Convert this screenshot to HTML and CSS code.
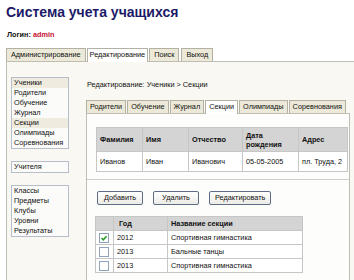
FILE: index.html
```html
<!DOCTYPE html>
<html lang="ru">
<head>
<meta charset="utf-8">
<title>Система учета учащихся</title>
<link rel="stylesheet" href="styles.css">
</head>
<body>
<h1 class="title">Система учета учащихся</h1>
<div class="login">Логин: <span class="user">admin</span></div>
<nav class="tabs">
  <span class="tab">Администрирование</span>
  <span class="tab active">Редактирование</span>
  <span class="tab">Поиск</span>
  <span class="tab exit">Выход</span>
</nav>
<div class="main">
  <aside class="side">
    <ul class="box">
      <li class="sel">Ученики</li>
      <li>Родители</li>
      <li>Обучение</li>
      <li>Журнал</li>
      <li class="sel">Секции</li>
      <li>Олимпиады</li>
      <li>Соревнования</li>
    </ul>
    <ul class="box">
      <li>Учителя</li>
    </ul>
    <ul class="box">
      <li>Классы</li>
      <li>Предметы</li>
      <li>Клубы</li>
      <li>Уровни</li>
      <li>Результаты</li>
    </ul>
  </aside>
  <section class="content">
    <div class="crumb">Редактирование: Ученики &gt; Секции</div>
    <nav class="subtabs">
      <span class="subtab">Родители</span>
      <span class="subtab">Обучение</span>
      <span class="subtab">Журнал</span>
      <span class="subtab active">Секции</span>
      <span class="subtab">Олимпиады</span>
      <span class="subtab">Соревнования</span>
    </nav>
    <div class="panel">
      <div class="info">
        <table class="grid info-table">
          <colgroup><col class="c1"><col class="c2"><col class="c3"><col class="c4"><col class="c5"></colgroup>
          <tr><th>Фамилия</th><th>Имя</th><th>Отчество</th><th>Дата<br>рождения</th><th>Адрес</th></tr>
          <tr><td>Иванов</td><td>Иван</td><td>Иванович</td><td>05-05-2005</td><td>пл. Труда, 2</td></tr>
        </table>
      </div>
      <div class="actions">
        <button class="btn" type="button">Добавить</button>
        <button class="btn" type="button">Удалить</button>
        <button class="btn" type="button">Редактировать</button>
      </div>
      <table class="grid sections">
        <colgroup><col class="s1"><col class="s2"><col class="s3"></colgroup>
        <tr><th></th><th class="year">Год</th><th>Название секции</th></tr>
        <tr><td class="chk"><span class="cb on"><svg viewBox="0 0 8 8" width="8" height="8"><path d="M1.5 4 L3.3 5.8 L6.6 2.2" fill="none" stroke="#2a9d2a" stroke-width="1.6"/></svg></span></td><td>2012</td><td>Спортивная гимнастика</td></tr>
        <tr><td class="chk"><span class="cb"></span></td><td>2013</td><td>Бальные танцы</td></tr>
        <tr><td class="chk"><span class="cb"></span></td><td>2013</td><td>Спортивная гимнастика</td></tr>
      </table>
    </div>
  </section>
</div>
</body>
</html>
```
FILE: styles.css
```css
body {
  margin: 0;
  background: #fff;
  font-family: "Liberation Sans", Arial, sans-serif;
  font-size: 7.3px;
  color: #111;
}
.title {
  margin: 0;
  padding: 4px 0 0 6px;
  font: bold 14px/16px "Liberation Sans", Arial, sans-serif;
  color: #1c1a68;
}
.login {
  margin-top: 10px;
  padding-left: 7px;
  font-weight: bold;
  line-height: 9px;
}
.login .user { color: #c8102e; }
.tabs {
  display: flex;
  gap: 1px;
  margin: 9px 0 0 6px;
  border-bottom: 1px solid #bfbdb4;
}
.tab, .subtab {
  line-height: 12px;
  padding: 0 3px;
  border: 1px solid #b3b0a4;
  border-bottom: none;
  background: #ece9d8;
  white-space: nowrap;
}
.tab { padding: 0 4px; }
.tab.active { padding: 0 2px 1px; }
.tab.active, .subtab.active {
  background: #fff;
  margin-bottom: -1px;
  padding-bottom: 1px;
}
.tab.exit { margin-left: 1px; }
.main {
  display: flex;
  margin-left: 6px;
  border-left: 1px solid #bfbdb4;
  background: #f9f8f3;
  min-height: 220px;
}
.side {
  width: 79px;
  flex: none;
  box-sizing: border-box;
  padding: 15px 0 0 4px;
}
.box {
  list-style: none;
  margin: 0;
  padding: 0;
  width: 58px;
  box-sizing: border-box;
  border: 1px solid #b7bdca;
  background: #fbfbf9;
}
.box + .box { margin-top: 12px; }
.box li {
  line-height: 10px;
  padding-left: 2px;
}
.box li.sel { background: #efebdf; }
.content {
  flex: 1;
  padding-top: 18px;
}
.crumb {
  line-height: 10px;
  padding-left: 1px;
}
.subtabs {
  display: flex;
  gap: 1px;
  margin-top: 10px;
}
.panel {
  border: 1px solid #bfbdb4;
  background: #fdfdfb;
  margin-right: 4px;
  min-height: 170px;
}
.info {
  padding: 13px 0 7px 9px;
  border-bottom: 1px solid #cfcfca;
}
.grid {
  border-collapse: collapse;
  background: #fff;
}
.grid th, .grid td {
  border: 1px solid #c6c6c6;
  padding: 0 3px;
  text-align: left;
  font-weight: normal;
  white-space: nowrap;
}
.grid th {
  background: #d4d4d4;
  font-weight: bold;
}
.info-table { width: 252px; }
.info-table th { line-height: 9px; height: 23px; padding-top: 0; padding-bottom: 0; }
.info-table td { height: 19px; }
.c1, .c2 { width: 46px; }
.c3 { width: 54px; }
.c4 { width: 56px; }
.actions {
  display: flex;
  gap: 10px;
  padding: 11px 0 0 10px;
}
.btn {
  font: inherit;
  color: #111;
  height: 14px;
  line-height: 12px;
  min-width: 46px;
  padding: 0 5px;
  border: 1px solid #5d6b86;
  border-radius: 2px;
  background: linear-gradient(#ffffff, #ecebe5);
}
.sections {
  width: 208px;
  margin: 11px 0 0 8px;
}
.sections th, .sections td { height: 13px; line-height: 12px; }
.sections th.year { padding-left: 5px; }
.s1 { width: 18px; }
.s2 { width: 54px; }
.sections td.chk { padding: 0 0 0 3px; }
.cb {
  display: inline-block;
  width: 8px;
  height: 8px;
  border: 1px solid #8ea2ba;
  background: #fff;
  vertical-align: middle;
}
.cb svg { display: block; }
```
